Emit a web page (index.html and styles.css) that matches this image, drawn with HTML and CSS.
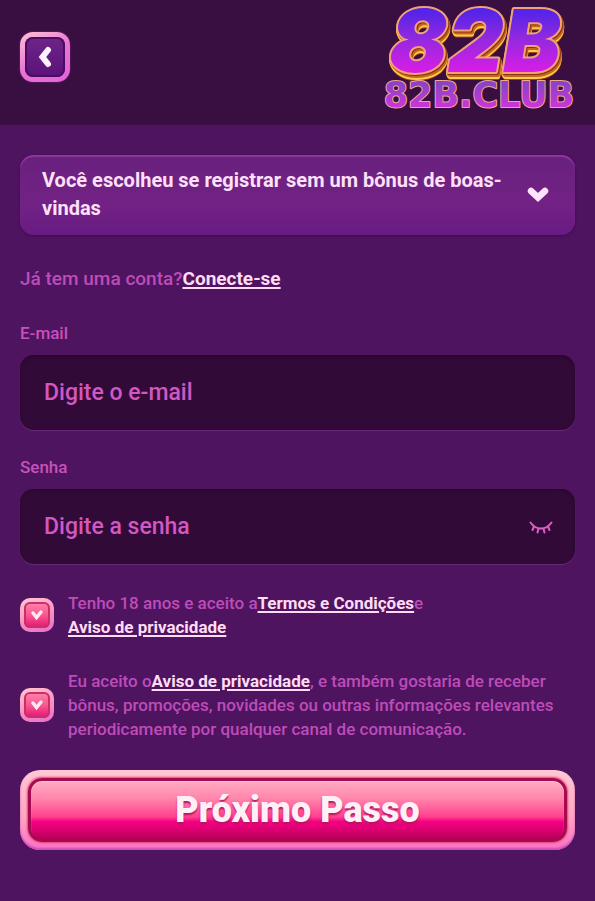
FILE: index.html
```html
<!DOCTYPE html>
<html lang="pt-BR">
<head>
<meta charset="utf-8">
<meta name="viewport" content="width=device-width, initial-scale=1">
<title>82B.CLUB</title>
<link rel="stylesheet" href="styles.css">
</head>
<body>
<header class="topbar">
  <button class="back" type="button" aria-label="Voltar">
    <svg width="16" height="24" viewBox="0 0 16 24" aria-hidden="true"><path d="M11 5 5.500 12l5.500 7" fill="none" stroke="#fff1fd" stroke-width="6" stroke-linecap="round" stroke-linejoin="miter"/></svg>
  </button>
  <a class="brand" href="#">
    <svg width="208" height="112" viewBox="0 0 208 112" role="img" aria-label="82B.CLUB">
      <defs>
        <linearGradient id="face" x1="0" y1="12" x2="0" y2="72" gradientUnits="userSpaceOnUse">
          <stop offset="0" stop-color="#5524e8"/><stop offset=".45" stop-color="#9329df"/><stop offset="1" stop-color="#d81de6"/>
        </linearGradient>
        <linearGradient id="small" x1="0" y1="84" x2="0" y2="107" gradientUnits="userSpaceOnUse">
          <stop offset="0" stop-color="#8744c8"/><stop offset="1" stop-color="#cb36d8"/>
        </linearGradient>
      </defs>
      <text class="logo-big" x="102" y="72">82B</text>
      <text class="logo-small" x="106" y="107">82B.CLUB</text>
    </svg>
  </a>
</header>

<main class="page">
  <button class="bonus" type="button" aria-expanded="false">
    <span>Você escolheu se registrar sem um bônus de boas-vindas</span>
    <svg width="22" height="16" viewBox="0 0 22 16" aria-hidden="true"><path d="M4 5l7 6.500L18 5" fill="none" stroke="#ffe3fb" stroke-width="6.500" stroke-linecap="round" stroke-linejoin="miter"/></svg>
  </button>

  <p class="login">Já tem uma conta?<a href="#">Conecte-se</a></p>

  <form class="form">
    <div class="field">
      <label for="email">E-mail</label>
      <div class="box"><input id="email" type="email" placeholder="Digite o e-mail"></div>
    </div>
    <div class="field">
      <label for="senha">Senha</label>
      <div class="box">
        <input id="senha" type="password" placeholder="Digite a senha">
        <button class="eye" type="button" aria-label="Mostrar senha">
          <svg width="24" height="16" viewBox="0 0 24 16" aria-hidden="true" fill="none" stroke="#d960c4" stroke-width="2" stroke-linecap="round"><path d="M1.500 3.500C7 11.500 17 11.500 22.500 3.500M5 7.500 3.500 11M9.500 9.500 8.500 13.500M14.500 9.500 15.500 13.500M19 7.500 20.500 11"/></svg>
        </button>
      </div>
    </div>

    <div class="consents">
      <div class="consent">
        <span class="tick">
          <input id="idade" type="checkbox" checked>
          <svg width="14" height="14" viewBox="0 0 14 14" aria-hidden="true"><path d="M3 5 6.500 9.500 11 4" fill="none" stroke="#ffe9f2" stroke-width="3.500" stroke-linecap="round" stroke-linejoin="miter"/></svg>
        </span>
        <label for="idade">Tenho 18 anos e aceito a<a href="#">Termos e Condições</a>e <a class="whole" href="#">Aviso de privacidade</a></label>
      </div>
      <div class="consent">
        <span class="tick">
          <input id="novidades" type="checkbox" checked>
          <svg width="14" height="14" viewBox="0 0 14 14" aria-hidden="true"><path d="M3 5 6.500 9.500 11 4" fill="none" stroke="#ffe9f2" stroke-width="3.500" stroke-linecap="round" stroke-linejoin="miter"/></svg>
        </span>
        <label for="novidades">Eu aceito o<a href="#">Aviso de privacidade</a>, e também gostaria de receber bônus, promoções, novidades ou outras informações relevantes periodicamente por qualquer canal de comunicação.</label>
      </div>
    </div>

    <button class="next" type="submit"><span>Próximo Passo</span></button>
  </form>
</main>
</body>
</html>
```
FILE: styles.css
```css
* {
  box-sizing: border-box;
}

body {
  margin: 0;
  min-height: 100vh;
  background: #4f145f;
  color: #bd4cb9;
  font-family: Roboto, "Liberation Sans", sans-serif;
}

button,
input {
  font: inherit;
}

button {
  cursor: pointer;
}

.topbar {
  display: flex;
  justify-content: space-between;
  align-items: flex-start;
  height: 125px;
  padding: 0 14px 0 20px;
  background: #380f40;
}

.back {
  display: flex;
  align-items: center;
  justify-content: center;
  width: 50px;
  height: 50px;
  margin-top: 32px;
  padding: 0;
  border: 5px solid transparent;
  border-radius: 13px;
  background:
    linear-gradient(#6f2587, #5a127a) padding-box,
    linear-gradient(150deg, #ffc4d6, #e877d2 50%, #e35fdb) border-box;
  box-shadow: inset 0 0 0 2px #4a0c62, 0 0 2px #8e2f8e;
}

.brand svg {
  display: block;
}

.logo-big {
  font: italic 900 86px Inter, sans-serif;
  text-anchor: middle;
  fill: url(#face);
  stroke: #f0a277;
  stroke-width: 4px;
  stroke-linejoin: round;
  paint-order: stroke;
  filter:
    drop-shadow(1px 1px 0 #8f3212)
    drop-shadow(1px 2px 0 #c4661c)
    drop-shadow(0 2px 0 #ffcf4a)
    drop-shadow(0 1px 0 #a8460f);
}

.logo-small {
  font: 700 35px "DejaVu Sans", sans-serif;
  text-anchor: middle;
  fill: url(#small);
  stroke: #f3a58e;
  stroke-width: 2px;
  stroke-linejoin: round;
  paint-order: stroke;
}

.page {
  padding: 30px 20px 50px;
}

.bonus {
  display: flex;
  align-items: center;
  justify-content: space-between;
  gap: 20px;
  width: 100%;
  min-height: 80px;
  padding: 10px 26px 12px 22px;
  border: 0;
  border-radius: 14px;
  background: linear-gradient(#69207e, #722284 60%, #681b83);
  box-shadow: inset 0 2px 1px #8d389e, 0 1px 3px #3f0c4e;
  color: #ffe0fa;
  font-size: 20px;
  font-weight: 700;
  line-height: 28px;
  text-align: left;
}

.bonus svg {
  flex: none;
}

a {
  color: #ffdcf5;
  font-weight: 700;
  text-decoration: underline;
  text-decoration-thickness: 2px;
  text-underline-offset: 2px;
}

.login {
  margin: 32px 0;
  font-size: 19px;
  font-weight: 500;
  line-height: 24px;
}

.form,
.field {
  display: flex;
  flex-direction: column;
}

.form {
  gap: 27px;
}

.field {
  gap: 12px;
}

.field label {
  color: #c851bb;
  font-size: 17px;
  font-weight: 500;
  line-height: 20px;
}

.box {
  display: flex;
  align-items: center;
  height: 75px;
  padding: 0 22px 0 24px;
  border-radius: 14px;
  background: #320a37;
  box-shadow: inset 0 2px 3px #2a0730, 0 1px 1px #6a2a78;
}

.box input {
  flex: 1;
  min-width: 0;
  padding: 0;
  border: 0;
  outline: 0;
  background: none;
  color: #d357c3;
  font-size: 23px;
  font-weight: 500;
}

.box input::placeholder {
  color: #d357c3;
  opacity: 1;
}

.eye {
  display: flex;
  padding: 0;
  border: 0;
  background: none;
}

.consents {
  display: flex;
  flex-direction: column;
  gap: 30px;
}

.consent {
  display: flex;
  align-items: center;
  gap: 14px;
  font-size: 17px;
  font-weight: 500;
  line-height: 24px;
}

.consent .whole {
  display: table;
}

.tick {
  display: grid;
  flex: none;
  place-items: center;
}

.tick input,
.tick svg {
  grid-area: 1 / 1;
}

.tick svg {
  pointer-events: none;
}

.tick input:not(:checked) + svg {
  visibility: hidden;
}

.tick input {
  appearance: none;
  width: 34px;
  height: 34px;
  margin: 0;
  border: 4px solid transparent;
  border-radius: 10px;
  background:
    linear-gradient(#ff86ac, #f9588f 50%, #e31274) padding-box,
    linear-gradient(160deg, #ffc9d4, #fa91c0 55%, #e86ad0) border-box;
  box-shadow: inset 0 0 0 2px #c93069;
}

.next {
  display: grid;
  height: 80px;
  margin-top: 2px;
  padding: 8px;
  border: 0;
  border-radius: 20px;
  background: linear-gradient(#ffc8d4, #ffa6c0 60%, #fb6fc9);
  box-shadow: inset 0 -2px 2px #c94fb4;
  color: #fff0f7;
  font-size: 36px;
  font-weight: 900;
  line-height: 40px;
}

.next span {
  display: grid;
  place-items: center;
  border: 3px solid #a80a50;
  border-radius: 14px;
  background: linear-gradient(#ffabc4, #ff86ac 30%, #ff4090 62%, #f50083 70%, #d4006c 88%, #b40058);
  box-shadow: 0 0 2px 1px #ea3f73, inset 0 1px 1px #ffc2d2;
  text-shadow: 0 2px 2px #b5155f;
}
```
